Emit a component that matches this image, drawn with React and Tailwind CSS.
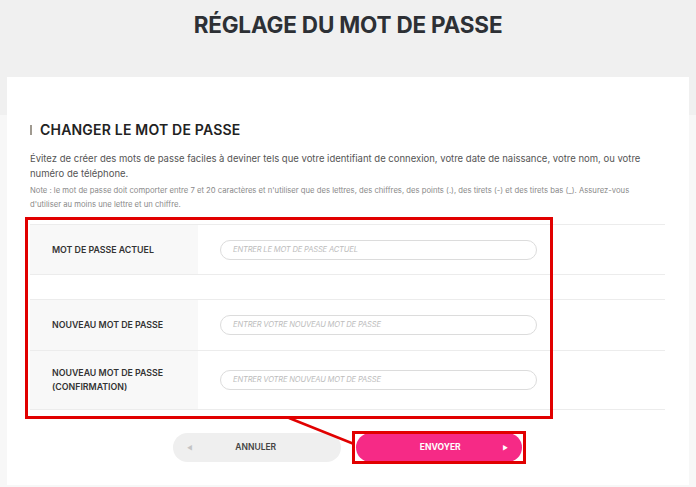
import React from 'react';

const fields = [
  { label: 'MOT DE PASSE ACTUEL', placeholder: 'ENTRER LE MOT DE PASSE ACTUEL', h: 'h-[50px]' },
  { label: 'NOUVEAU MOT DE PASSE', placeholder: 'ENTRER VOTRE NOUVEAU MOT DE PASSE', h: 'h-[51px]' },
  { label: 'NOUVEAU MOT DE PASSE (CONFIRMATION)', placeholder: 'ENTRER VOTRE NOUVEAU MOT DE PASSE', h: 'h-[59px]' },
];

function FieldRow({ field }) {
  return (
    <div className={`flex ${field.h} border-b border-[#ececec]`}>
      <div className="w-[168px] bg-[#f8f8f8] flex items-center pl-[22px] pr-3">
        <span className="text-[8.8px] leading-[14px] font-semibold text-[#333] max-w-[125px]">
          {field.label}
        </span>
      </div>
      <div className="flex-1 flex items-center pl-[22px]">
        <div className="w-[317px] h-[20px] rounded-full border border-[#dcdcdc] flex items-center pl-3">
          <span className="text-[7.6px] italic text-[#bdbdbd] tracking-tight">{field.placeholder}</span>
        </div>
      </div>
    </div>
  );
}

export default function App() {
  return (
    <div
      className="relative w-full min-h-[487px] bg-[linear-gradient(#f0f0f0_0_115px,#f7f7f7_115px)] pb-[2px]"
      style={{ fontFamily: 'Inter, "Open Sans", sans-serif' }}
    >
      {/* Title */}
      <div className="h-[77px] pt-[11px] text-center">
        <h1 className="text-[22.5px] leading-[28px] font-bold text-[#2d3035] tracking-[-0.2px]">
          RÉGLAGE DU MOT DE PASSE
        </h1>
      </div>

      {/* Card */}
      <div className="mx-[7px] bg-white pt-[45px] pl-[23px] pr-[24px] pb-[22px] min-h-[408px]">
        <div className="flex items-center gap-[8px]">
          <span className="w-[2px] h-[10px] bg-[#a09a90]" />
          <h2 className="text-[14px] leading-[16px] font-semibold text-[#222] tracking-[0.2px]">
            CHANGER LE MOT DE PASSE
          </h2>
        </div>

        <p className="mt-[13px] text-[9.5px] leading-[15px] text-[#555]">
          Évitez de créer des mots de passe faciles à deviner tels que votre identifiant de connexion, votre date de naissance, votre nom, ou votre
          <br />
          numéro de téléphone.
        </p>
        <p className="mt-[3px] text-[7.7px] leading-[14px] text-[#8a8a8a]">
          Note : le mot de passe doit comporter entre 7 et 20 caractères et n'utiliser que des lettres, des chiffres, des points (.), des tirets (-) et des tirets bas (_). Assurez-vous
          <br />
          d'utiliser au moins une lettre et un chiffre.
        </p>

        {/* Form table */}
        <div className="mt-[12px] border-t border-[#ececec]">
          <FieldRow field={fields[0]} />
          <div className="h-[25px] border-b border-[#ececec]" />
          <FieldRow field={fields[1]} />
          <FieldRow field={fields[2]} />
        </div>

        {/* Buttons */}
        <div className="mt-[23px] flex justify-center gap-[15px]">
          <button className="w-[168px] h-[29px] rounded-full bg-[#efefef] flex items-center px-[14px]">
            <span className="text-[6px] text-[#c4c4c4]">◀</span>
            <span className="flex-1 text-center text-[8.5px] font-semibold text-[#444] pr-[8px]">ANNULER</span>
          </button>
          <button className="w-[166px] h-[29px] rounded-full bg-[#f62a86] flex items-center px-[14px]">
            <span className="flex-1 text-center text-[8.5px] font-bold text-white pl-[8px]">ENVOYER</span>
            <span className="text-[6px] text-white">▶</span>
          </button>
        </div>
      </div>

      {/* Annotation overlays */}
      <div className="absolute left-[25px] top-[217px] w-[528px] h-[202px] border-[3px] border-[#e10000] pointer-events-none" />
      <div className="absolute left-[352px] top-[431px] w-[174px] h-[33px] border-[3px] border-[#e10000] pointer-events-none" />
      <svg className="absolute left-0 top-0 pointer-events-none" width="696" height="487">
        <line x1="289" y1="418" x2="354" y2="444" stroke="#e10000" strokeWidth="2.5" />
      </svg>
    </div>
  );
}
